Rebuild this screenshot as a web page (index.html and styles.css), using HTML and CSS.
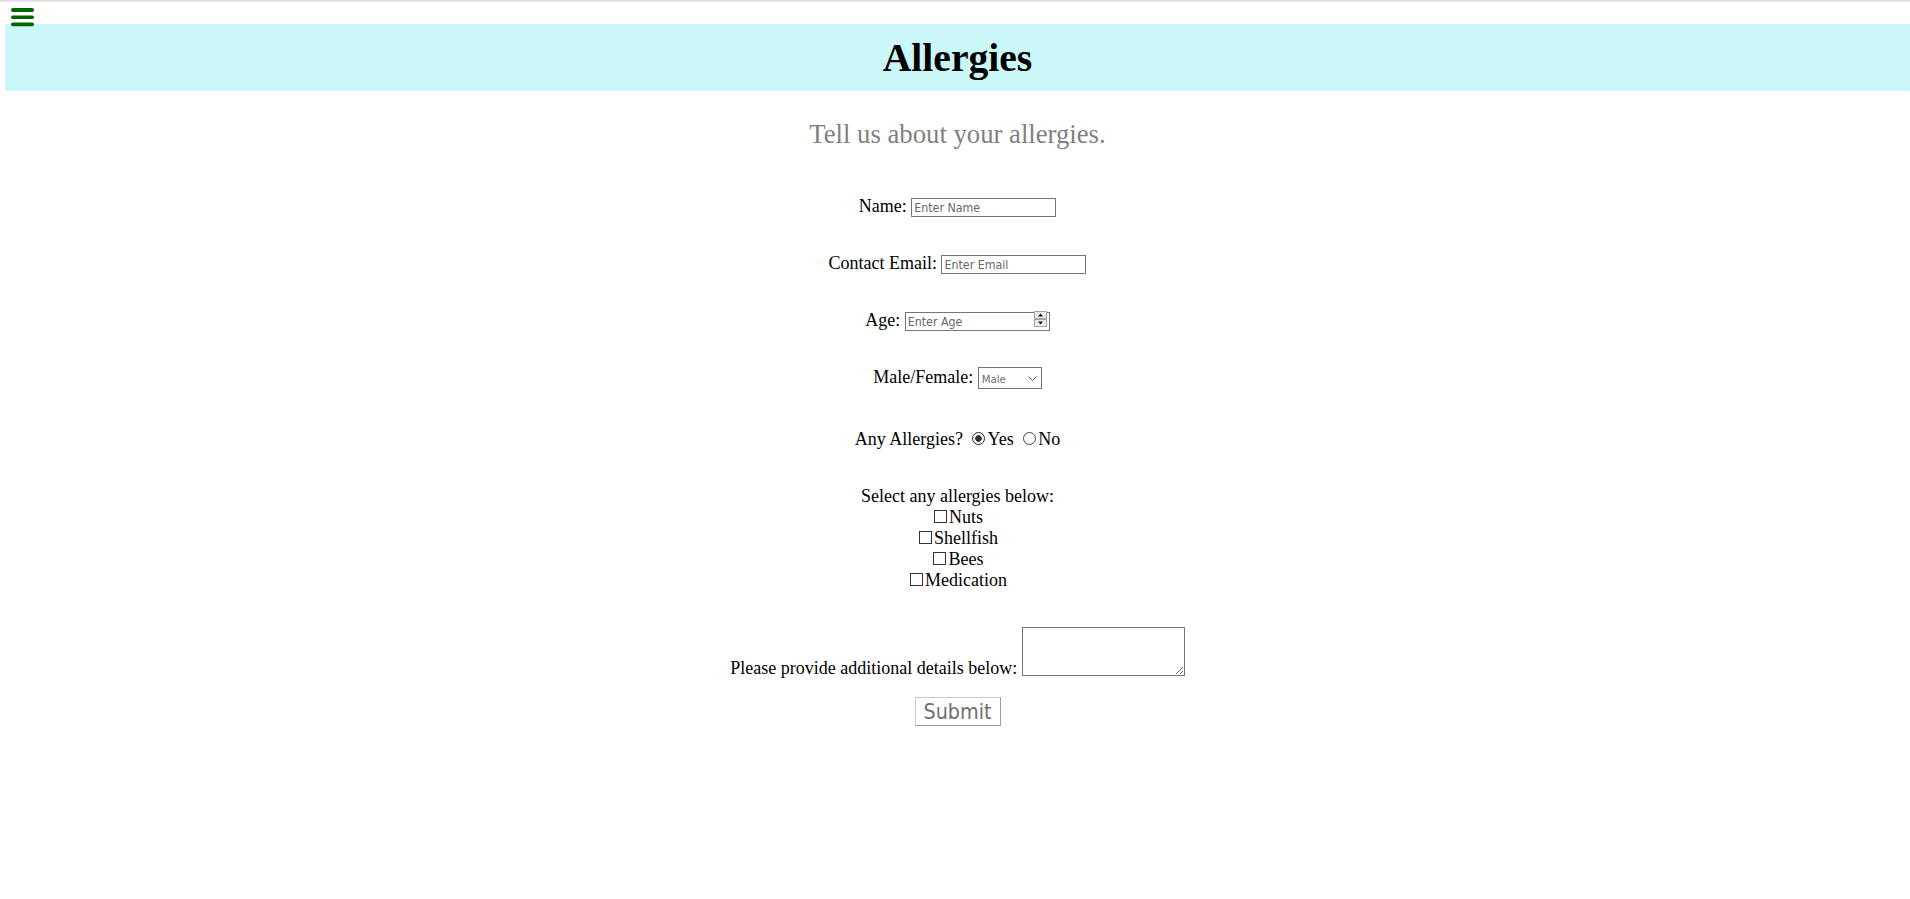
FILE: index.html
```html
<!DOCTYPE html>
<html lang="en">
<head>
<meta charset="utf-8">
<title>Allergies</title>
<link rel="stylesheet" href="styles.css">
</head>
<body>
<div class="topline"></div>
<nav class="nav">
  <a class="menu" href="#" aria-label="Menu">
    <svg width="24" height="19" viewBox="0 0 24 19"><rect x="0" y="0" width="23" height="4" rx="2" fill="#006400"/><rect x="0" y="7.5" width="23" height="3.6" rx="1.8" fill="#006400"/><rect x="0" y="14.6" width="23" height="3.6" rx="1.8" fill="#006400"/></svg>
  </a>
</nav>
<header class="banner"><h1>Allergies</h1></header>
<main class="content">
  <h2 class="subtitle">Tell us about your allergies.</h2>
  <form class="form" onsubmit="return false;">
    <div class="row row-name"><label for="name">Name:</label> <input class="field" id="name" type="text" placeholder="Enter Name"></div>
    <div class="row row-email"><label for="email">Contact Email:</label> <input class="field" id="email" type="email" placeholder="Enter Email"></div>
    <div class="row row-age"><label for="age">Age:</label> <span class="spin-wrap"><input class="field num" id="age" type="number" placeholder="Enter Age"><svg class="spinner" width="13" height="16" viewBox="0 0 13 16"><rect x="0.5" y="0.5" width="12" height="7" fill="#ececec" stroke="#a3a3a3"/><rect x="0.5" y="8.5" width="12" height="7" fill="#ececec" stroke="#a3a3a3"/><path d="M4 5.5h5L6.5 2.5z" fill="#111"/><path d="M4 10.5h5L6.5 13.5z" fill="#111"/></svg></span></div>
    <div class="row row-mf"><label for="sex">Male/Female:</label> <span class="select-wrap"><select id="sex" class="sel"><option>Male</option><option>Female</option></select><svg class="chev" width="9" height="5" viewBox="0 0 9 5"><path d="M0.5 0.5L4.5 4.5L8.5 0.5" fill="none" stroke="#555" stroke-width="1"/></svg></span></div>
    <div class="row row-any">Any Allergies? <input type="radio" name="any" id="yes" class="radio" checked><label for="yes">Yes</label> <input type="radio" name="any" id="no" class="radio"><label for="no">No</label></div>
    <div class="row row-select">
      <div>Select any allergies below:</div>
      <div><input type="checkbox" class="check" id="c1"><label for="c1">Nuts</label></div>
      <div><input type="checkbox" class="check" id="c2"><label for="c2">Shellfish</label></div>
      <div><input type="checkbox" class="check" id="c3"><label for="c3">Bees</label></div>
      <div><input type="checkbox" class="check" id="c4"><label for="c4">Medication</label></div>
    </div>
    <div class="row row-details"><label for="details">Please provide additional details below:</label> <textarea id="details" class="area"></textarea></div>
    <button type="submit" class="submit">Submit</button>
  </form>
</main>
</body>
</html>
```

FILE: styles.css
```css
html, body {
  margin: 0;
  background: #fff;
}
body {
  font-family: "Liberation Serif", "Times New Roman", serif;
  font-size: 18px;
  color: #000;
}
.topline {
  height: 2px;
  background: linear-gradient(#d6d6d6, #efefef);
}
.nav {
  height: 22px;
  position: relative;
}
.menu {
  position: absolute;
  left: 11px;
  top: 6px;
  z-index: 2;
  line-height: 0;
}
.banner {
  margin-left: 5px;
  height: 67px;
  background: #caf7f7;
  text-align: center;
}
.banner h1 {
  margin: 0;
  padding-top: 2px;
  font-size: 39.6px;
  line-height: 64px;
  font-weight: bold;
}
.content {
  margin-left: 5px;
  text-align: center;
}
.subtitle {
  margin: 28px 0 0;
  font-size: 26.7px;
  font-weight: normal;
  line-height: 30px;
  color: #808080;
}
.form {
  display: flex;
  flex-direction: column;
  align-items: center;
}
.row {
  line-height: 21px;
}
.row-name { margin-top: 47px; }
.row-email { margin-top: 36px; }
.row-age { margin-top: 36px; }
.row-mf { margin-top: 36px; }
.row-any { margin-top: 40px; }
.row-select { margin-top: 36px; }
.row-details { margin-top: 36px; }

.field {
  box-sizing: border-box;
  width: 145px;
  height: 19px;
  margin: 0;
  border: 1px solid #767676;
  border-radius: 0;
  padding: 2px 2px 0;
  font: 12.3px "DejaVu Sans Condensed", "DejaVu Sans", sans-serif;
  color: #000;
  background: #fff;
  vertical-align: baseline;
}
.field::placeholder {
  color: #666;
}
.num {
  -moz-appearance: textfield;
  appearance: textfield;
}
.num::-webkit-inner-spin-button,
.num::-webkit-outer-spin-button {
  -webkit-appearance: none;
  margin: 0;
}
.spin-wrap,
.select-wrap {
  position: relative;
  display: inline-block;
}
.spinner {
  position: absolute;
  right: 3px;
  top: 1px;
}
.sel {
  -webkit-appearance: none;
  appearance: none;
  box-sizing: border-box;
  width: 64px;
  height: 22px;
  margin: 0;
  border: 1px solid #767676;
  border-radius: 0;
  padding: 3px 16px 0 3px;
  font: 11.3px "DejaVu Sans Condensed", "DejaVu Sans", sans-serif;
  color: #6e6e6e;
  background: #fff;
  vertical-align: baseline;
}
.chev {
  position: absolute;
  right: 5px;
  top: 9px;
  pointer-events: none;
}
.radio {
  -webkit-appearance: none;
  appearance: none;
  box-sizing: border-box;
  width: 13px;
  height: 13px;
  margin: 0 2px 0 5px;
  border: 1px solid #444;
  border-radius: 50%;
  background: #fff;
  vertical-align: baseline;
}
.radio:checked {
  border-color: #222;
  background: radial-gradient(circle, #333 0, #333 3px, #fff 3.6px);
}
.check {
  -webkit-appearance: none;
  appearance: none;
  box-sizing: border-box;
  width: 13px;
  height: 13px;
  margin: 0 2px 0 2px;
  border: 1px solid #333;
  border-radius: 0;
  background: #fff;
  vertical-align: baseline;
}
.area {
  box-sizing: border-box;
  width: 163px;
  height: 49px;
  margin: 0;
  border: 1px solid #767676;
  border-radius: 0;
  vertical-align: -2px;
  font: 13px "DejaVu Sans", sans-serif;
}
.submit {
  margin-top: 18px;
  box-sizing: border-box;
  width: 86px;
  height: 29px;
  padding: 0;
  border: 1px solid;
  border-color: #c9c9c9 #9c9c9c #9c9c9c #c9c9c9;
  border-radius: 0;
  background: #fff;
  color: #707070;
  font: 21.3px "DejaVu Sans Condensed", "DejaVu Sans", sans-serif;
  line-height: 27px;
}
```
